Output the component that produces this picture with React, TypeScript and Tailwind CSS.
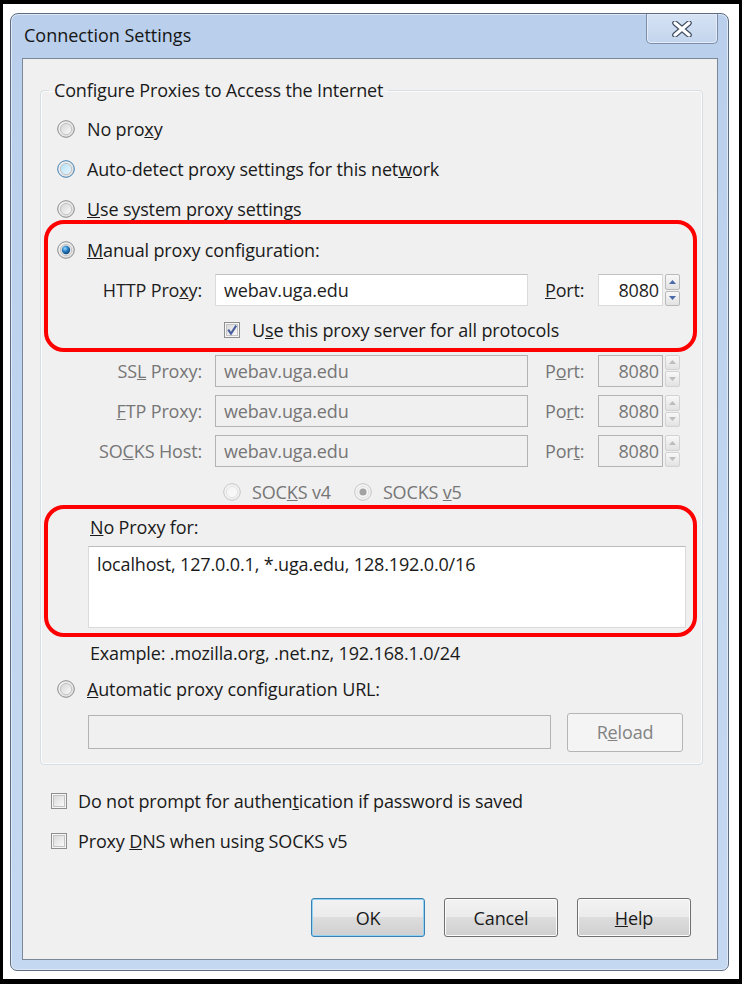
import { useId, ReactNode } from "react";

type RadioKind = "off" | "hover" | "on" | "disabled" | "disabledOn";

// Win7 style radio bullet
function Radio({ kind = "off" }: { kind?: RadioKind }) {
  const id = useId().replace(/[^a-zA-Z0-9]/g, "");
  const dis = kind === "disabled" || kind === "disabledOn";
  const ring = kind === "hover" ? "#3c7fb1" : dis ? "#c6c6c6" : "#8c8c8c";
  const top = kind === "hover" ? "#b4e0f8" : dis ? "#f3f3f3" : "#d2d2d2";
  const bottom = kind === "hover" ? "#eaf7fe" : dis ? "#fbfbfb" : "#fdfdfd";
  return (
    <svg width="18" height="18" viewBox="0 0 18 18" className="shrink-0">
      <defs>
        <linearGradient id={id + "o"} x1="0" y1="0" x2="1" y2="1">
          <stop offset="0" stopColor="#f7f7f7" />
          <stop offset="1" stopColor={dis ? "#ededed" : "#dadada"} />
        </linearGradient>
        <linearGradient id={id + "i"} x1="0" y1="0" x2="1" y2="1">
          <stop offset="0" stopColor={top} />
          <stop offset="1" stopColor={bottom} />
        </linearGradient>
        <radialGradient id={id + "d"} cx="0.38" cy="0.32" r="0.75">
          <stop offset="0" stopColor="#9ad9ff" />
          <stop offset="0.45" stopColor="#2b80c5" />
          <stop offset="1" stopColor="#0a3c6e" />
        </radialGradient>
      </defs>
      <circle cx="9" cy="9" r="8.3" fill={`url(#${id}o)`} stroke={ring} strokeWidth="1" />
      <circle cx="9" cy="9" r="5.6" fill={`url(#${id}i)`} stroke={dis ? "#dddddd" : "#bababa"} strokeWidth="0.8" />
      {kind === "on" && <circle cx="9" cy="9" r="4.2" fill={`url(#${id}d)`} />}
      {kind === "disabledOn" && <circle cx="9" cy="9" r="3.6" fill="#a2a2a2" />}
    </svg>
  );
}

function Check({ checked = false }: { checked?: boolean }) {
  const id = useId().replace(/[^a-zA-Z0-9]/g, "");
  return (
    <svg width="16" height="16" viewBox="0 0 16 16" className="shrink-0">
      <defs>
        <linearGradient id={id} x1="0" y1="0" x2="1" y2="1">
          <stop offset="0" stopColor="#d8d8d8" />
          <stop offset="1" stopColor="#fbfbfb" />
        </linearGradient>
      </defs>
      <rect x="0.5" y="0.5" width="15" height="15" fill="#f6f6f6" stroke="#8e8f8f" />
      <rect x="2.5" y="2.5" width="11" height="11" fill={`url(#${id})`} stroke="#c4c4c4" />
      {checked && <path d="M4.2 7.6 L7 11.6 L12.2 3.6" stroke="#4a5f9f" strokeWidth="2.1" fill="none" />}
    </svg>
  );
}

function Spin({ disabled = false }: { disabled?: boolean }) {
  const c = disabled ? "#bdbdbd" : "#4a6aa8";
  const btn = "flex flex-1 items-center justify-center rounded-[2px] border bg-gradient-to-b from-[#f8f8f8] to-[#e2e2e2] " +
    (disabled ? "border-[#d2d2d2]" : "border-[#b9b9b9]");
  return (
    <div className="ml-[2px] flex h-[32px] w-[15px] flex-col gap-[1px]">
      <div className={btn}>
        <svg width="7" height="4" viewBox="0 0 7 4"><path d="M0 4 L3.5 0 L7 4Z" fill={c} /></svg>
      </div>
      <div className={btn}>
        <svg width="7" height="4" viewBox="0 0 7 4"><path d="M0 0 L3.5 4 L7 0Z" fill={c} /></svg>
      </div>
    </div>
  );
}

function ProxyRow({ label, port, disabled = false, tall = false }: { label: ReactNode; port: ReactNode; disabled?: boolean; tall?: boolean }) {
  const txt = disabled ? "text-[#767676]" : "text-[#1e1e1e]";
  const box = disabled
    ? "border border-[#b3b3b3] bg-[#f0f0f0]"
    : "border border-[#dadada] border-t-[#c2c2c2] bg-white";
  return (
    <div className={`flex items-center ${tall ? "h-[41px]" : "h-[40px]"} ${txt}`}>
      <div className="w-[145px] text-right">{label}</div>
      <div className={`ml-[13px] flex h-[32px] w-[313px] items-center pl-[8px] ${box}`}>webav.uga.edu</div>
      <div className="ml-[17px] w-[38px]">{port}</div>
      <div className={`ml-[15px] flex h-[32px] w-[65px] items-center justify-end pr-[3px] ${box}`}>8080</div>
      <Spin disabled={disabled} />
    </div>
  );
}

function Button({ children, primary = false, disabled = false, className = "" }: { children: ReactNode; primary?: boolean; disabled?: boolean; className?: string }) {
  const look = disabled
    ? "border-[#b5b5b5] bg-[#f4f4f4] text-[#838383]"
    : primary
      ? "border-[#3c7fb1] bg-[linear-gradient(to_bottom,#f2f2f2_0%,#ebebeb_50%,#dddddd_50%,#cfcfcf_100%)] shadow-[inset_0_0_0_1px_#8fd2f3]"
      : "border-[#707070] bg-[linear-gradient(to_bottom,#f2f2f2_0%,#ebebeb_50%,#dddddd_50%,#cfcfcf_100%)] shadow-[inset_0_0_0_1px_#fcfcfc]";
  return (
    <div className={`flex items-center justify-center rounded-[3px] border ${look} ${className}`}>{children}</div>
  );
}

export default function App() {
  return (
    <div className="h-[984px] w-[742px] bg-black pb-[5px] pl-[3px] pr-[3px] pt-[4px] font-['Open_Sans',sans-serif] text-[18px] leading-[24px] tracking-[-0.15px] text-[#1a1a1a]">
      <div className="h-full w-full bg-white pb-[8px] pl-[7px] pr-[10px] pt-[9px]">
        {/* window frame */}
        <div className="flex h-full flex-col rounded-b-[7px] rounded-t-[8px] border border-[#5d6c80] bg-gradient-to-b from-[#b9cfeb] via-[#c0d5ef] to-[#c5d8f1] pb-[10px] pl-[11px] pr-[10px] shadow-[inset_0_0_0_1px_#dfe9f6]">
          <div className="flex h-[44px] items-start justify-between">
            <div className="pl-[2px] pt-[9px] text-[18px] tracking-normal text-[#151515]">Connection Settings</div>
            <div className="flex h-[30px] w-[72px] items-center justify-center rounded-b-[5px] border border-t-0 border-[#7d8ea6] bg-gradient-to-b from-[#d6e3f4] to-[#c3d5ed] shadow-[inset_0_0_0_1px_#e3ecf8]">
              <svg width="20" height="16" viewBox="0 0 20 16">
                <path d="M3 2 L17 14 M17 2 L3 14" stroke="#3f4d61" strokeWidth="5.6" strokeLinecap="round" />
                <path d="M3 2 L17 14 M17 2 L3 14" stroke="#ffffff" strokeWidth="3.2" strokeLinecap="round" />
              </svg>
            </div>
          </div>

          {/* client area */}
          <div className="relative flex flex-1 flex-col border border-[#7b8899] bg-[#f0f0f0]">
            <fieldset className="ml-[17px] mt-[19px] w-[658px] rounded-[4px] border border-[#d5dfe5] px-[16px] pb-[12px] pt-[7px] shadow-[inset_0_0_0_1px_#fbfbfb]">
              <legend className="-ml-[8px] px-[5px] leading-[24px]">Configure Proxies to Access the Internet</legend>

              <div className="flex h-[40px] items-center gap-[12px]"><Radio /><span>No pro<u>x</u>y</span></div>
              <div className="flex h-[40px] items-center gap-[12px]"><Radio kind="hover" /><span>Auto-detect proxy settings for this net<u>w</u>ork</span></div>
              <div className="flex h-[40px] items-center gap-[12px]"><Radio /><span><u>U</u>se system proxy settings</span></div>
              <div className="flex h-[41px] items-center gap-[12px]"><Radio kind="on" /><span><u>M</u>anual proxy configuration:</span></div>

              <ProxyRow label={<>HTTP Pro<u>x</u>y:</>} port={<><u>P</u>ort:</>} />
              <div className="flex h-[40px] items-center gap-[12px] pl-[167px]">
                <Check checked />
                <span>U<u>s</u>e this proxy server for all protocols</span>
              </div>
              <ProxyRow disabled tall label={<>SS<u>L</u> Proxy:</>} port={<>P<u>o</u>rt:</>} />
              <ProxyRow disabled label={<><u>F</u>TP Proxy:</>} port={<>Po<u>r</u>t:</>} />
              <ProxyRow disabled label={<>SO<u>C</u>KS Host:</>} port={<>Por<u>t</u>:</>} />

              <div className="flex h-[41px] items-center text-[#767676]">
                <div className="ml-[166px]"><Radio kind="disabled" /></div>
                <span className="ml-[11px]">SOC<u>K</u>S v4</span>
                <div className="ml-[23px]"><Radio kind="disabledOn" /></div>
                <span className="ml-[11px]">SOCKS <u>v</u>5</span>
              </div>

              <div className="flex h-[30px] items-center pl-[33px]"><span><u>N</u>o Proxy for:</span></div>
              <div className="ml-[31px] mt-[4px] h-[82px] w-[598px] border border-[#dadada] border-t-[#bcbcbc] bg-white pl-[8px] pt-[5px]">
                localhost, 127.0.0.1, *.uga.edu, 128.192.0.0/16
              </div>
              <div className="mt-[12px] flex h-[26px] items-center pl-[33px]">Example: .mozilla.org, .net.nz, 192.168.1.0/24</div>
              <div className="mt-[3px] flex h-[40px] items-center gap-[12px]"><Radio /><span><u>A</u>utomatic proxy configuration URL:</span></div>
              <div className="mt-[3px] flex h-[40px] items-center">
                <div className="ml-[31px] h-[34px] w-[463px] border border-[#b3b3b3] bg-[#f0f0f0]" />
                <Button disabled className="ml-[16px] h-[39px] w-[116px]">R<u>e</u>load</Button>
              </div>
            </fieldset>

            <div className="mt-[16px] flex h-[40px] items-center gap-[11px] pl-[28px]">
              <Check />
              <span>Do not prompt for authen<u>t</u>ication if password is saved</span>
            </div>
            <div className="flex h-[40px] items-center gap-[11px] pl-[28px]">
              <Check />
              <span>Proxy <u>D</u>NS when using SOCKS v5</span>
            </div>

            <div className="flex-1" />
            <div className="flex justify-end gap-[19px] pb-[22px] pr-[26px]">
              <Button primary className="h-[39px] w-[114px]">OK</Button>
              <Button className="h-[39px] w-[114px]">Cancel</Button>
              <Button className="h-[39px] w-[114px]"><u>H</u>elp</Button>
            </div>

            {/* red annotation outlines */}
            <div className="pointer-events-none absolute left-[21px] top-[161px] h-[132px] w-[653px] rounded-[20px] border-[4px] border-[#ff0000]" />
            <div className="pointer-events-none absolute left-[21px] top-[446px] h-[132px] w-[653px] rounded-[20px] border-[4px] border-[#ff0000]" />
          </div>
        </div>
      </div>
    </div>
  );
}
